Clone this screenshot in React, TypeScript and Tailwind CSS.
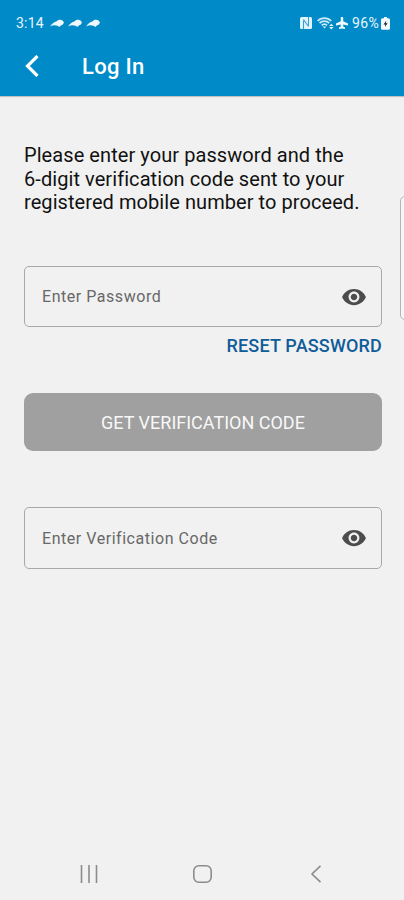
import { useState } from "react";

const NotificationIcon = () => (
  <svg className="w-[14px] h-[9px]" viewBox="0 0 14 9" fill="#eef8ff">
    <path d="M0 7.400C2 4.600 4.400 3.200 6.400 2.600 7.600.600 10.600.200 12.600 1.400L14 3.600 12.800 5.400C11.600 6 10.600 6.200 9.600 8L7.400 6.800C5 5.800 2.400 6.200 0 7.400Z" />
  </svg>
);

const NfcIcon = () => (
  <svg className="w-[12px] h-[12px]" viewBox="0 0 12 12" fill="none">
    <rect width="12" height="12" rx="1.500" fill="#e4f4ff" />
    <path
      d="M3.500 12V3.500M3.500 2.500L8.500 9.500M8.500 8.500V0"
      stroke="#2f9fd4"
      strokeWidth="1.100"
    />
  </svg>
);

const WifiIcon = () => (
  <svg className="w-[17px] h-[13px]" viewBox="0 0 17 13" fill="none">
    <path
      d="M.600 4C4.200.200 10.600.200 14.200 4M2.600 6.200c2.600-2.700 7-2.700 9.600 0M4.700 8.400c1.600-1.500 3.900-1.500 5.400 0"
      stroke="#cdeafb"
      strokeWidth="1.700"
    />
    <path d="M5.600 9.400h3.800l-1.900 2.200z" fill="#cdeafb" />
    <path d="M14.300 6.800l2.200 2.300h-4.400zM14.300 12.400l2.200-2.300h-4.400z" fill="#e4f4ff" />
  </svg>
);

const PlaneIcon = () => (
  <svg className="w-[12px] h-[12px]" viewBox="0 0 12 12" fill="#f2faff">
    <path d="M4.800 1a1.200 1.200 0 0 1 2.400 0v3.200L12 6.400v2L7.200 7.500v2l1.800 1.100V12L6 11.400 3 12v-1.400L4.800 9.500v-2L0 8.400v-2l4.800-2.200z" />
  </svg>
);

const BatteryIcon = () => (
  <svg className="w-[9px] h-[13px]" viewBox="0 0 9 13">
    <path
      d="M3 0h3v1.300h1.500A1.500 1.500 0 0 1 9 2.800v8.400a1.500 1.500 0 0 1-1.500 1.500h-6A1.500 1.500 0 0 1 0 11.200V2.800a1.500 1.500 0 0 1 1.500-1.500H3z"
      fill="#f2faff"
    />
    <path d="M5.200 3.800L2.600 7.400h1.700L3.900 10l2.700-3.800H4.900z" fill="#222" />
  </svg>
);

const EyeIcon = () => (
  <svg className="w-[26px] h-[26px]" viewBox="0 0 24 24" fill="#4c4c4c">
    <path d="M12 4.500C7 4.500 2.730 7.610 1 12c1.730 4.390 6 7.500 11 7.500s9.270-3.110 11-7.500c-1.730-4.390-6-7.500-11-7.500zM12 17c-2.760 0-5-2.240-5-5s2.240-5 5-5 5 2.240 5 5-2.240 5-5 5zm0-8c-1.660 0-3 1.340-3 3s1.340 3 3 3 3-1.340 3-3-1.340-3-3-3z" />
  </svg>
);

type SecretFieldProps = {
  label: string;
  className: string;
};

const SecretField = ({ label, className }: SecretFieldProps) => {
  const [visible, setVisible] = useState(false);

  return (
    <div
      className={`flex items-center rounded-[5px] border border-[#a8a8a8] pl-[17px] pr-[14px] ${className}`}
    >
      <input
        type={visible ? "text" : "password"}
        placeholder={label}
        aria-label={label}
        className="min-w-0 flex-1 bg-transparent pt-px text-[16px] tracking-[0.540px] text-[#333] outline-none placeholder:text-[#686868]"
      />
      <button
        type="button"
        aria-label="Toggle visibility"
        onClick={() => setVisible(!visible)}
      >
        <EyeIcon />
      </button>
    </div>
  );
};

const App = () => {
  return (
    <div className="relative flex h-[900px] w-[404px] flex-col overflow-hidden bg-[#f1f1f1] font-['Roboto',sans-serif]">
      <header className="h-[96px] shrink-0 bg-[#008ac8] shadow-[0_1px_1px_rgba(0,0,0,0.2)]">
        {/* Status bar */}
        <div className="flex h-[46px] items-center justify-between pl-[16px] pr-[14px] text-[14px] text-[#e8f6ff]">
          <div className="flex items-center gap-[4px]">
            <span className="mr-[2px] pt-px tracking-[0.200px]">3:14</span>
            <NotificationIcon />
            <NotificationIcon />
            <NotificationIcon />
          </div>
          <div className="flex items-center">
            <NfcIcon />
            <span className="ml-[5px]">
              <WifiIcon />
            </span>
            <span className="ml-[2px]">
              <PlaneIcon />
            </span>
            <span className="ml-[4px] pt-px tracking-[0.300px]">96%</span>
            <span className="ml-[2px]">
              <BatteryIcon />
            </span>
          </div>
        </div>

        {/* App bar */}
        <div className="flex h-[40px] items-center pl-[25px]">
          <button type="button" aria-label="Back">
            <svg className="w-[14px] h-[22px]" viewBox="0 0 14 22" fill="none">
              <path d="M12.500 1L2.500 11l10 10" stroke="#fff" strokeWidth="3.200" />
            </svg>
          </button>
          <h1 className="ml-[43px] text-[22px] font-medium tracking-[0.300px] text-white">
            Log In
          </h1>
        </div>
      </header>

      <main className="flex flex-1 flex-col pl-[24px] pr-[22px] pt-[48px]">
        <p className="whitespace-nowrap text-[20px] leading-[23.500px] tracking-[0.070px] text-[#111]">
          Please enter your password and the
          <br />
          6-digit verification code sent to your
          <br />
          registered mobile number to proceed.
        </p>

        <SecretField label="Enter Password" className="mt-[51.500px] h-[61px]" />
        <button
          type="button"
          className="mt-[8px] self-end text-[18px] leading-[22px] font-medium tracking-[0.180px] text-[#0f5c99]"
        >
          RESET PASSWORD
        </button>

        <button
          type="button"
          className="mt-[36px] h-[58px] rounded-[9px] bg-[#a0a0a0] pt-px text-[18px] text-[#f8f8f8]"
        >
          GET VERIFICATION CODE
        </button>

        <SecretField
          label="Enter Verification Code"
          className="mt-[56px] h-[62px]"
        />
      </main>

      {/* Navigation bar */}
      <nav className="flex h-[52px] shrink-0 items-center pl-[80px]">
        <svg className="w-[18px] h-[18px]" viewBox="0 0 18 18" fill="none">
          <path d="M1.500 0v18M9 0v18M16.500 0v18" stroke="#8c8c8c" strokeWidth="1.600" />
        </svg>
        <svg className="ml-[95px] w-[19px] h-[18px]" viewBox="0 0 19 18" fill="none">
          <rect x=".800" y=".800" width="17.400" height="16.400" rx="5" stroke="#8c8c8c" strokeWidth="1.600" />
        </svg>
        <svg className="ml-[98px] w-[12px] h-[18px]" viewBox="0 0 12 18" fill="none">
          <path d="M10.500 .800L2 9l8.500 8.200" stroke="#8c8c8c" strokeWidth="1.600" />
        </svg>
      </nav>

      {/* Edge panel handle */}
      <div className="absolute top-[196px] right-[-6px] h-[124px] w-[10px] rounded-[5px] border border-[#b4b4b4] bg-[#f6f6f6]" />
    </div>
  );
};

export default App;
